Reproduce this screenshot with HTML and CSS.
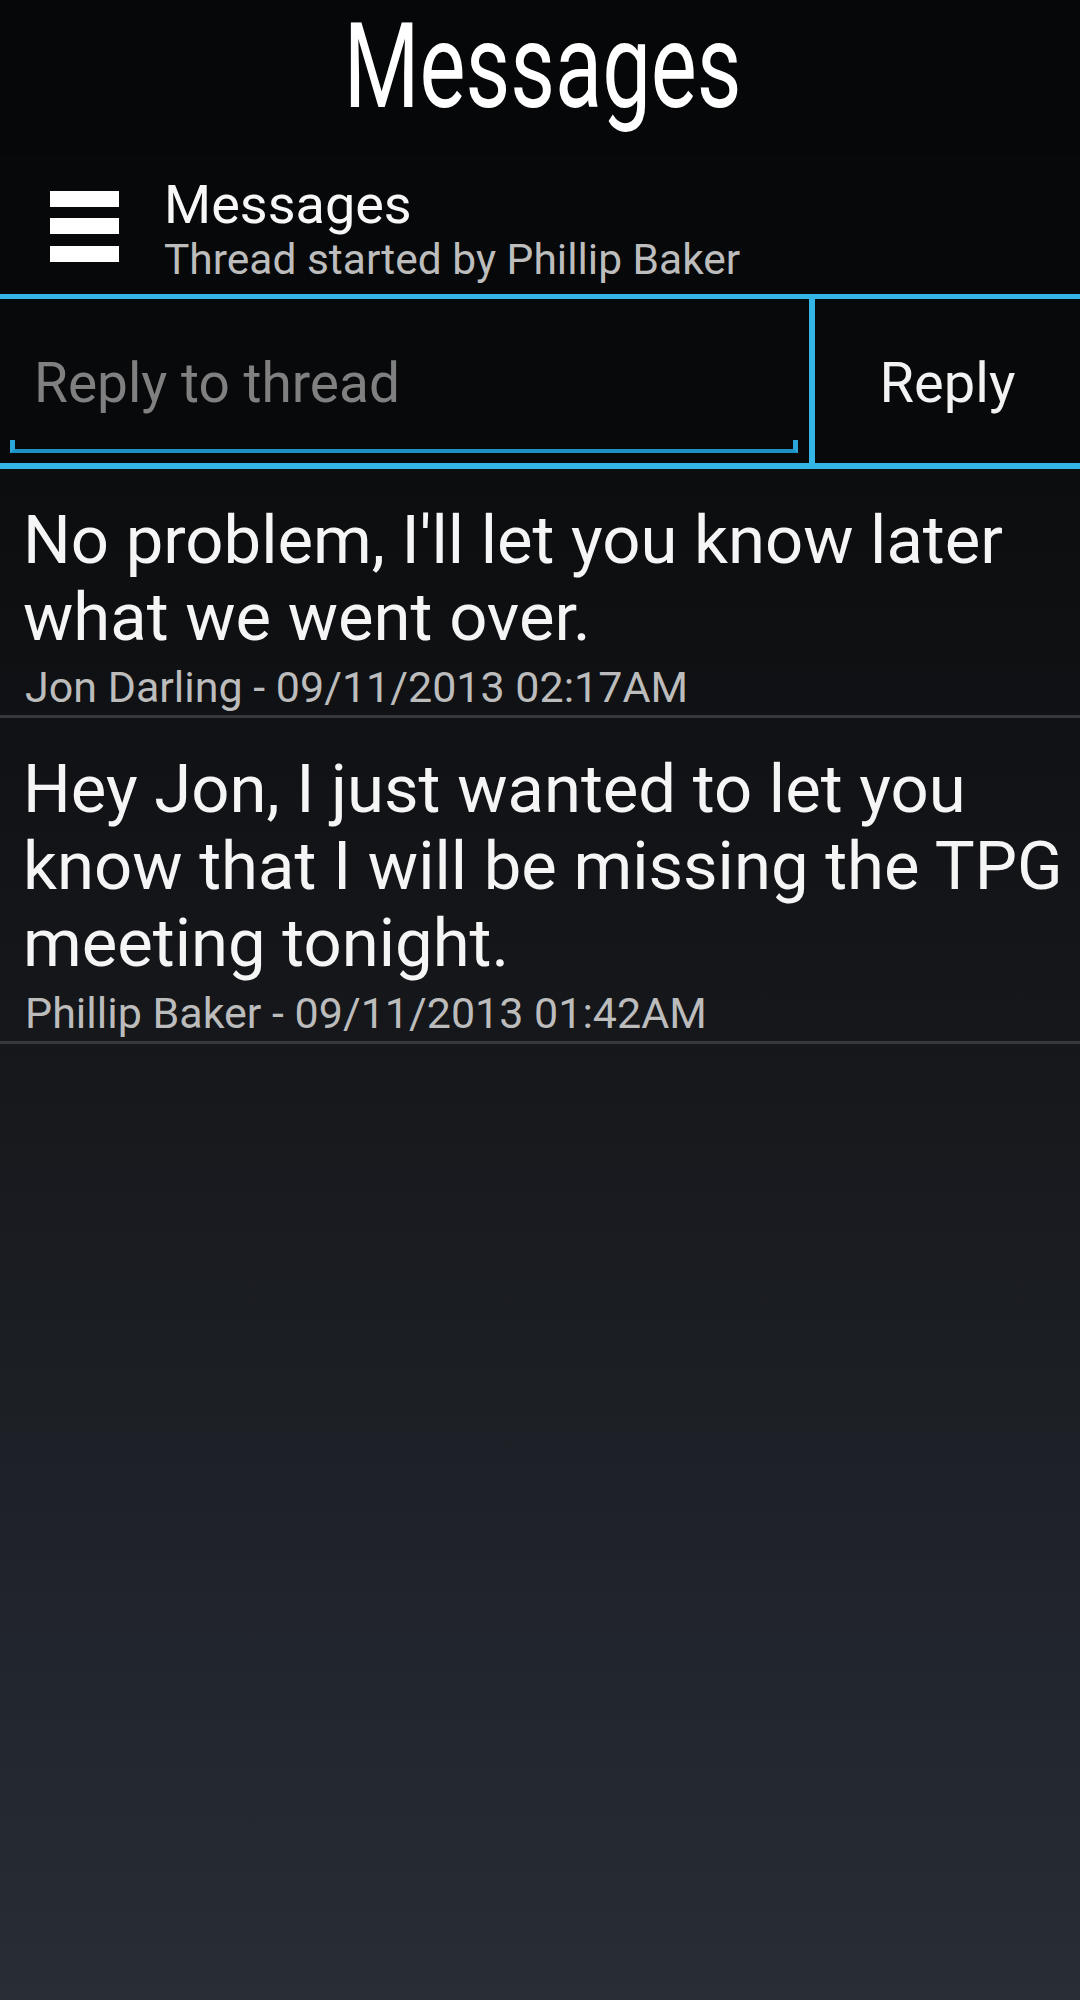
FILE: index.html
```html
<!DOCTYPE html>
<html lang="en">
<head>
<meta charset="utf-8">
<title>Messages</title>
<link rel="stylesheet" href="styles.css">
</head>
<body>
<div class="screen">
  <header class="titlebar">
    <h1 class="title"><span class="title-text">Messages</span></h1>
  </header>
  <div class="actionbar">
    <svg class="menu-icon" width="69" height="71" viewBox="0 0 69 71" aria-hidden="true">
      <rect x="0" y="0" width="69" height="16" fill="#ffffff"/>
      <rect x="0" y="27" width="69" height="16" fill="#ffffff"/>
      <rect x="0" y="55" width="69" height="16" fill="#ffffff"/>
    </svg>
    <div class="ab-text">
      <div class="ab-title">Messages</div>
      <div class="ab-sub">Thread started by Phillip Baker</div>
    </div>
  </div>
  <div class="reply-row">
    <div class="reply-field">
      <div class="placeholder">Reply to thread</div>
      <div class="field-line"></div>
    </div>
    <div class="reply-btn">Reply</div>
  </div>
  <ul class="messages">
    <li class="msg">
      <p class="msg-body">No problem, I'll let you know later what we went over.</p>
      <p class="msg-meta">Jon Darling - 09/11/2013 02:17AM</p>
    </li>
    <li class="msg">
      <p class="msg-body">Hey Jon, I just wanted to let you know that I will be missing the TPG meeting tonight.</p>
      <p class="msg-meta">Phillip Baker - 09/11/2013 01:42AM</p>
    </li>
  </ul>
</div>
</body>
</html>
```

FILE: styles.css
```css
* { box-sizing: border-box; }

html, body {
  margin: 0;
  padding: 0;
  background: #282d36;
}

body {
  font-family: Roboto, "Noto Sans", "Liberation Sans", sans-serif;
  color: #f5f5f5;
}

.screen {
  width: 1080px;
  min-height: 2000px;
  display: flex;
  flex-direction: column;
}

.titlebar {
  height: 155px;
  background: #050708;
}

.title {
  margin: 0;
  padding: 0 0 20px 6px;
  font-size: 118px;
  line-height: 135px;
  font-weight: 400;
  text-align: center;
  color: #ffffff;
  white-space: nowrap;
}

.title-text {
  display: inline-block;
  transform: scaleX(0.735);
}

.actionbar {
  height: 139px;
  display: flex;
  align-items: flex-start;
  padding-left: 50px;
  background: #06080a;
}

.menu-icon {
  flex: none;
  margin-top: 36px;
}

.ab-text {
  margin-left: 45px;
  margin-top: 21px;
}

.ab-title {
  font-size: 54px;
  line-height: 57px;
  color: #f7f7f7;
}

.ab-sub {
  margin-top: 3px;
  font-size: 42.5px;
  line-height: 48px;
  color: #bdbdbd;
}

.reply-row {
  display: flex;
  height: 175px;
  border-top: 5px solid #33b5e5;
  border-bottom: 6px solid #33b5e5;
  background: #08090b;
}

.reply-field {
  flex: 1;
  padding-top: 52px;
}

.placeholder {
  padding-left: 34px;
  font-size: 55px;
  line-height: 64px;
  color: #808080;
}

.field-line {
  margin: 25px 11px 0 10px;
  height: 13px;
  border-left: 5px solid #2aa6da;
  border-right: 5px solid #2aa6da;
  border-bottom: 4px solid #1d90c4;
}

.reply-btn {
  flex: none;
  width: 271px;
  border-left: 6px solid #33b5e5;
  display: flex;
  align-items: center;
  justify-content: center;
  padding-top: 4px;
  font-size: 56px;
  color: #f2f2f2;
}

.messages {
  flex: 1;
  list-style: none;
  margin: 0;
  padding: 0;
  background: linear-gradient(180deg, #0c0d0f 0%, #16181c 40%, #282d36 100%);
}

.msg {
  padding: 33px 8px 3px 23px;
  border-bottom: 3px solid #37383c;
}

.msg-body {
  margin: 0;
  font-size: 67px;
  line-height: 77px;
  color: #f5f5f5;
}

.msg-meta {
  margin: 7px 0 0;
  padding-left: 2px;
  font-size: 43px;
  line-height: 49px;
  color: #bcbcbc;
}
```
